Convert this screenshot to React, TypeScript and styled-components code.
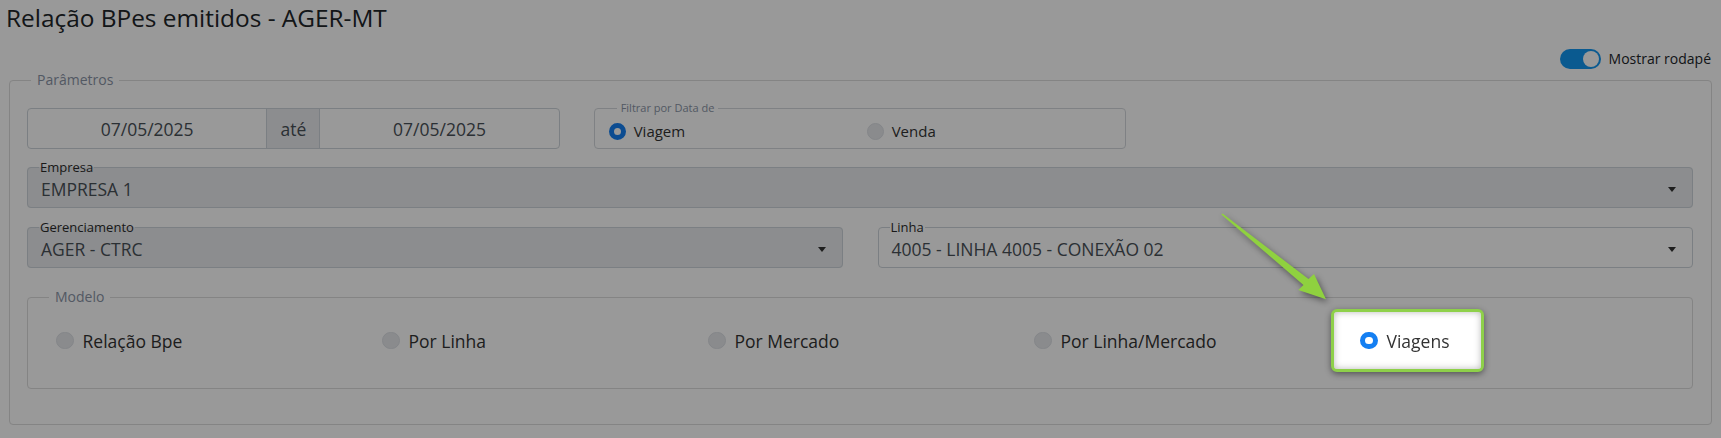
import React from "react";
import styled, { createGlobalStyle } from "styled-components";

const GlobalStyle = createGlobalStyle`
  html, body { margin: 0; padding: 0; background: #ffffff; }
  body { font-family: "Open Sans", "Noto Sans", "Liberation Sans", sans-serif; color: #212529; }
  *, *::before, *::after { box-sizing: border-box; }
`;

const Page = styled.div`
  position: relative;
  width: 1721px;
  min-height: 438px;
  padding: 0 9px;
  overflow: hidden;
`;

const Title = styled.h1`
  margin: 0 0 0 -3px;
  padding-top: 2px;
  font-size: 24.4px;
  line-height: 32px;
  font-weight: 400;
  color: #212529;
`;

const TopBar = styled.div`
  display: flex;
  justify-content: flex-end;
  align-items: center;
  gap: 8px;
  height: 20px;
  margin-top: 15px;
  padding-right: 1px;
`;

const Switch = styled.span<{ $on: boolean }>`
  display: flex;
  align-items: center;
  justify-content: ${(p) => (p.$on ? "flex-end" : "flex-start")};
  width: 41px;
  height: 20px;
  padding: 2px;
  border-radius: 10px;
  background: ${(p) => (p.$on ? "#1296f0" : "#ced4da")};
`;

const Knob = styled.span`
  width: 16px;
  height: 16px;
  border-radius: 50%;
  background: #ffffff;
`;

const SwitchLabel = styled.span`
  font-size: 14px;
  line-height: 20px;
  color: #212529;
`;

const Group = styled.fieldset`
  margin: 1px 0 0;
  padding: 11px 18px 35px 17px;
  border: 1px solid #dcdcdc;
  border-radius: 4px;
  min-width: 0;
`;

const GroupLegend = styled.legend<{ $shift: number }>`
  margin-left: ${(p) => p.$shift}px;
  padding: 0 6px;
  font-size: 14px;
  line-height: 20px;
  color: #8a94a6;
`;

const Stack = styled.div`
  display: flex;
  flex-direction: column;
`;

const TopRow = styled.div`
  display: grid;
  grid-template-columns: repeat(3, 1fr);
  column-gap: 34px;
  align-items: start;
`;

const DateGroup = styled.div`
  display: flex;
  height: 41px;
  margin-top: 7px;
  border: 1px solid #ced4da;
  border-radius: 4px;
  overflow: hidden;
`;

const DateInput = styled.div`
  flex: 1;
  display: flex;
  align-items: center;
  justify-content: center;
  font-size: 17.5px;
  color: #495057;
`;

const Addon = styled.div`
  width: 54px;
  display: flex;
  align-items: center;
  justify-content: center;
  background: #e9ecef;
  border-left: 1px solid #ced4da;
  border-right: 1px solid #ced4da;
  font-size: 17.5px;
  color: #495057;
`;

const FilterSet = styled.fieldset`
  margin: 0;
  padding: 4px 14px 11px;
  border: 1px solid #d4d8dd;
  border-radius: 4px;
  min-width: 0;
`;

const FilterLegend = styled.legend`
  margin-left: 8px;
  padding: 0 4px;
  font-size: 11px;
  line-height: 14px;
  color: #8a94a6;
`;

const FilterOptions = styled.div`
  display: grid;
  grid-template-columns: 258px 1fr;
  align-items: center;
  height: 18px;
`;

const Option = styled.label<{ $size: number; $gap: number }>`
  display: inline-flex;
  align-items: center;
  gap: ${(p) => p.$gap}px;
  font-size: ${(p) => p.$size}px;
  line-height: 24px;
  color: #333333;
`;

const Dot = styled.span<{ $checked?: boolean; $d: number }>`
  flex: none;
  width: ${(p) => p.$d}px;
  height: ${(p) => p.$d}px;
  border-radius: 50%;
  background: ${(p) => (p.$checked ? "#ffffff" : "#e6e8ec")};
  border: ${(p) => (p.$checked ? "5.5px solid #147ff2" : "1px solid #dcdfe4")};
`;

const SelectBox = styled.fieldset<{ $disabled?: boolean; $gapTop: number }>`
  margin: ${(p) => p.$gapTop}px 0 0;
  padding: 2px 16px 6px 13px;
  border: 1px solid #ced4da;
  border-radius: 4px;
  background: ${(p) => (p.$disabled ? "#e9ecef" : "#ffffff")};
  min-width: 0;
`;

const SelectLegend = styled.legend`
  margin-left: -2px;
  padding: 0 1px;
  font-size: 13px;
  line-height: 16px;
  color: #2b2b2b;
`;

const SelectInner = styled.div`
  display: flex;
  align-items: center;
  height: 24px;
`;

const SelectValue = styled.span`
  flex: 1;
  font-size: 17.5px;
  line-height: 24px;
  color: #495057;
  white-space: nowrap;
`;

const Caret = styled.span`
  width: 0;
  height: 0;
  border-left: 4px solid transparent;
  border-right: 4px solid transparent;
  border-top: 5px solid #333333;
`;

const PairRow = styled.div`
  display: grid;
  grid-template-columns: 1fr 1fr;
  column-gap: 35px;
`;

const ModelSet = styled.fieldset`
  margin: 19px 0 0;
  padding: 2px 6px 16px 28px;
  border: 1px solid #dcdcdc;
  border-radius: 4px;
  min-width: 0;
`;

const ModelGrid = styled.div`
  display: grid;
  grid-template-columns: repeat(5, 1fr);
  align-items: center;
  min-height: 63px;
`;

const Spotlight = styled.label`
  position: relative;
  z-index: 1001;
  display: flex;
  align-items: center;
  gap: 9px;
  width: 153px;
  height: 63px;
  margin-left: -29px;
  padding-left: 26px;
  border: 3px solid #8ed04a;
  border-radius: 6px;
  background: #ffffff;
  box-shadow: 0 2px 6px rgba(0, 0, 0, 0.45), inset 0 0 7px rgba(0, 0, 0, 0.28);
  font-size: 17.5px;
  line-height: 24px;
  color: #333333;
`;

const Overlay = styled.div`
  position: fixed;
  inset: 0;
  z-index: 1000;
  background: rgba(0, 0, 0, 0.4);
`;

const ArrowLayer = styled.svg`
  position: absolute;
  left: 1215px;
  top: 205px;
  z-index: 1002;
  overflow: visible;
  filter: drop-shadow(2px 3px 3px rgba(0, 0, 0, 0.45));
  pointer-events: none;
`;

function Select({ label, value, disabled, gapTop }: { label: string; value: string; disabled?: boolean; gapTop: number }) {
  return (
    <SelectBox $disabled={disabled} $gapTop={gapTop}>
      <SelectLegend>{label}</SelectLegend>
      <SelectInner>
        <SelectValue>{value}</SelectValue>
        <Caret />
      </SelectInner>
    </SelectBox>
  );
}

const modelos = ["Relação Bpe", "Por Linha", "Por Mercado", "Por Linha/Mercado"];

export default function App() {
  return (
    <>
      <GlobalStyle />
      <Page>
        <Title>Relação BPes emitidos - AGER-MT</Title>
        <TopBar>
          <Switch $on>
            <Knob />
          </Switch>
          <SwitchLabel>Mostrar rodapé</SwitchLabel>
        </TopBar>
        <Group>
          <GroupLegend $shift={4}>Parâmetros</GroupLegend>
          <Stack>
            <TopRow>
              <DateGroup>
                <DateInput>07/05/2025</DateInput>
                <Addon>até</Addon>
                <DateInput>07/05/2025</DateInput>
              </DateGroup>
              <FilterSet>
                <FilterLegend>Filtrar por Data de</FilterLegend>
                <FilterOptions>
                  <Option $size={15} $gap={8}>
                    <Dot $checked $d={17} />
                    Viagem
                  </Option>
                  <Option $size={15} $gap={8}>
                    <Dot $d={17} />
                    Venda
                  </Option>
                </FilterOptions>
              </FilterSet>
            </TopRow>
            <Select label="Empresa" value="EMPRESA 1" disabled gapTop={10} />
            <PairRow>
              <Select label="Gerenciamento" value="AGER - CTRC" disabled gapTop={11} />
              <Select label="Linha" value="4005 - LINHA 4005 - CONEXÃO 02" gapTop={11} />
            </PairRow>
            <ModelSet>
              <GroupLegend $shift={-7}>Modelo</GroupLegend>
              <ModelGrid>
                {modelos.map((m) => (
                  <Option key={m} $size={17.5} $gap={9}>
                    <Dot $d={17.5} />
                    {m}
                  </Option>
                ))}
                <Spotlight>
                  <Dot $checked $d={17.5} />
                  Viagens
                </Spotlight>
              </ModelGrid>
            </ModelSet>
          </Stack>
        </Group>
        <Overlay />
        <ArrowLayer width="120" height="100" viewBox="0 0 120 100">
          <polygon
            points="7.5,8.4 93.5,73.9 99,69 111,94.3 83.3,85 88.5,80.1 6.3,9.6"
            fill="#8fd13f"
          />
        </ArrowLayer>
      </Page>
    </>
  );
}
